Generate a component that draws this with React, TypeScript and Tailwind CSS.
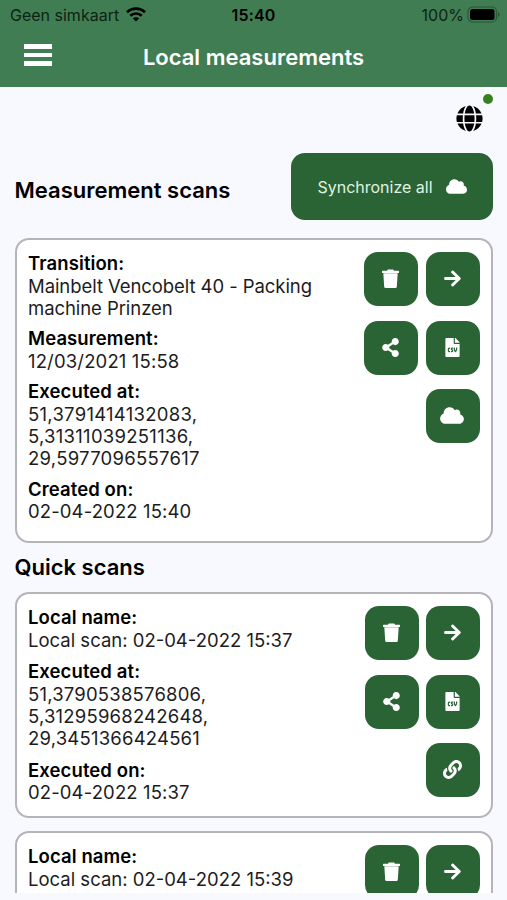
import type { ReactNode } from 'react';
import { FaArrowRight, FaCloud, FaFileCsv, FaGlobe, FaLink, FaShareAlt } from 'react-icons/fa';

type Field = { label: string; lines: string[]; tracking?: string };

const MEASUREMENT: Field[] = [
  { label: 'Transition:', lines: ['Mainbelt Vencobelt 40 - Packing', 'machine Prinzen'], tracking: 'tracking-[-0.07px]' },
  { label: 'Measurement:', lines: ['12/03/2021 15:58'], tracking: 'tracking-[0.15px]' },
  { label: 'Executed at:', lines: ['51,3791414132083,', '5,31311039251136,', '29,5977096557617'], tracking: 'tracking-[0.27px]' },
  { label: 'Created on:', lines: ['02-04-2022 15:40'], tracking: 'tracking-[0.12px]' },
];

const QUICK_SCAN: Field[] = [
  { label: 'Local name:', lines: ['Local scan: 02-04-2022 15:37'] },
  { label: 'Executed at:', lines: ['51,3790538576806,', '5,31295968242648,', '29,3451366424561'], tracking: 'tracking-[0.2px]' },
  { label: 'Executed on:', lines: ['02-04-2022 15:37'], tracking: 'tracking-[0.12px]' },
];

const NEXT_SCAN: Field[] = [{ label: 'Local name:', lines: ['Local scan: 02-04-2022 15:39'] }];

function WifiIcon() {
  return (
    <svg viewBox="0 0 20 15" className="h-[15px] w-5" fill="none" stroke="currentColor" strokeWidth="2.7">
      <path d="M1 5.3a13 13 0 0 1 18 0" />
      <path d="M4.3 8.8a8.2 8.2 0 0 1 11.4 0" />
      <path d="M10 14.6 6.9 11.5a4.4 4.4 0 0 1 6.2 0Z" fill="currentColor" stroke="none" />
    </svg>
  );
}

function BatteryIcon() {
  return (
    <svg viewBox="0 0 33 17" className="h-[17px] w-[33px]">
      <rect x="1" y="1" width="28.5" height="15" rx="4.5" fill="none" stroke="#2b5738" strokeWidth="1.2" />
      <rect x="3" y="3" width="24.5" height="11" rx="2.5" fill="#000" />
      <path d="M31 6v5c2-.7 2-4.3 0-5Z" fill="#2b5738" />
    </svg>
  );
}

function TrashIcon() {
  return (
    <svg viewBox="0 0 17 20" className="h-5 w-[17px]" fill="currentColor">
      <path d="M.5 1.7H5L5.8.5h5.4l.8 1.2h4.5q.5 0 .5.5v1.2q0 .5-.5.5H.5q-.5 0-.5-.5V2.2q0-.5.5-.5Z" />
      <path d="M1.3 4.2h14.400l-.9 13.600q-.1 1.200-1.300 1.200H3.500q-1.200 0-1.300-1.200Z" />
    </svg>
  );
}

function IconButton({ label, children }: { label: string; children: ReactNode }) {
  return (
    <button aria-label={label} className="flex h-[54px] w-[54px] items-center justify-center rounded-[14px] bg-[#2a6334] pb-px pr-0.5 text-white">
      {children}
    </button>
  );
}

type ScanCardProps = { fields: Field[]; action: ReactNode; className: string; rowGap: string; buttonGap: string };

function ScanCard({ fields, action, className, rowGap, buttonGap }: ScanCardProps) {
  return (
    <section className={`flex shrink-0 justify-between rounded-[14px] border-2 border-[#b4b4b9] bg-white pl-[11.5px] pr-[11px] pt-3 ${className}`}>
      <div className={`flex flex-col whitespace-nowrap text-[18.5px] leading-[22.3px] ${rowGap}`}>
        {fields.map((field) => (
          <div key={field.label}>
            <h3 className="mb-[0.4px] font-semibold tracking-[0.1px] text-black">{field.label}</h3>
            {field.lines.map((line) => (
              <p key={line} className={`text-[#1c1c1e] ${field.tracking ?? ''}`}>{line}</p>
            ))}
          </div>
        ))}
      </div>
      <div className="flex flex-col items-end gap-[14.7px]">
        <div className={`flex ${buttonGap}`}>
          <IconButton label="Delete"><TrashIcon /></IconButton>
          <IconButton label="Open"><FaArrowRight className="h-[19px] w-[19px]" /></IconButton>
        </div>
        <div className={`flex ${buttonGap}`}>
          <IconButton label="Share"><FaShareAlt className="h-[19px] w-[19px]" /></IconButton>
          <IconButton label="Export CSV">
            <FaFileCsv className="h-[19px] w-[19px]" />
          </IconButton>
        </div>
        {action}
      </div>
    </section>
  );
}

export default function App() {
  return (
    <div className="flex h-[900px] w-[507px] flex-col overflow-hidden bg-[#f8f8ff] font-['Inter',sans-serif] text-black">
      <header className="h-[87px] shrink-0 bg-[#417d53]">
        <div className="grid h-[30px] grid-cols-3 items-center pl-2.5 pr-[7px] text-base text-[#0c2413]">
          <div className="flex items-center gap-[7px] whitespace-nowrap">
            <span>Geen simkaart</span>
            <span className="pb-px text-black"><WifiIcon /></span>
          </div>
          <div className="pr-[3px] text-center font-semibold tracking-[0.2px] text-black">15:40</div>
          <div className="flex items-center justify-end gap-[3px]">
            <span>100%</span>
            <span className="pb-0.5"><BatteryIcon /></span>
          </div>
        </div>
        <div className="grid h-[54px] grid-cols-[60px_1fr_60px] items-center">
          <button aria-label="Menu" className="mb-1 ml-6 flex w-7 flex-col gap-1">
            <span className="h-[4.5px] bg-white" />
            <span className="h-[4.5px] bg-white" />
            <span className="h-[4.5px] bg-white" />
          </button>
          <h1 className="text-center text-[22px] font-semibold text-white">Local measurements</h1>
        </div>
      </header>

      <main className="flex h-[806px] shrink-0 flex-col overflow-hidden pl-[14.5px] pr-3.5">
        <div className="flex h-[66px] shrink-0 justify-end pr-[10.5px] pt-[18px]">
          <div className="relative h-[27px] w-[27px]">
            <FaGlobe className="h-[27px] w-[27px]" />
            <span className="absolute -right-2.5 -top-[11px] h-2.5 w-2.5 rounded-full bg-[#37801f]" />
          </div>
        </div>

        <div className="flex shrink-0 items-center justify-between">
          <h2 className="mt-2 text-[22px] font-semibold">Measurement scans</h2>
          <button className="flex h-[67px] w-[202px] items-center justify-center gap-[13px] rounded-[14px] bg-[#2a6334] text-base text-[#e0f3e3]">
            <span>Synchronize all</span>
            <FaCloud className="h-[17px] w-[21px] text-white" />
          </button>
        </div>

        <ScanCard
          fields={MEASUREMENT}
          className="mt-[18px] h-[305px]"
          rowGap="gap-[7.9px]"
          buttonGap="gap-2"
          action={<IconButton label="Upload"><FaCloud className="h-[19px] w-6" /></IconButton>}
        />

        <h2 className="mb-px mt-2 h-8 shrink-0 text-[22px] font-semibold leading-8">Quick scans</h2>

        <ScanCard
          fields={QUICK_SCAN}
          className="mt-2 h-[226px]"
          rowGap="gap-[9px]"
          buttonGap="gap-[7px]"
          action={<IconButton label="Link"><FaLink className="h-[19px] w-[19px]" /></IconButton>}
        />
        <ScanCard fields={NEXT_SCAN} className="mt-[13px] h-[226px]" rowGap="gap-[9px]" buttonGap="gap-[7px]" action={null} />
      </main>
    </div>
  );
}
